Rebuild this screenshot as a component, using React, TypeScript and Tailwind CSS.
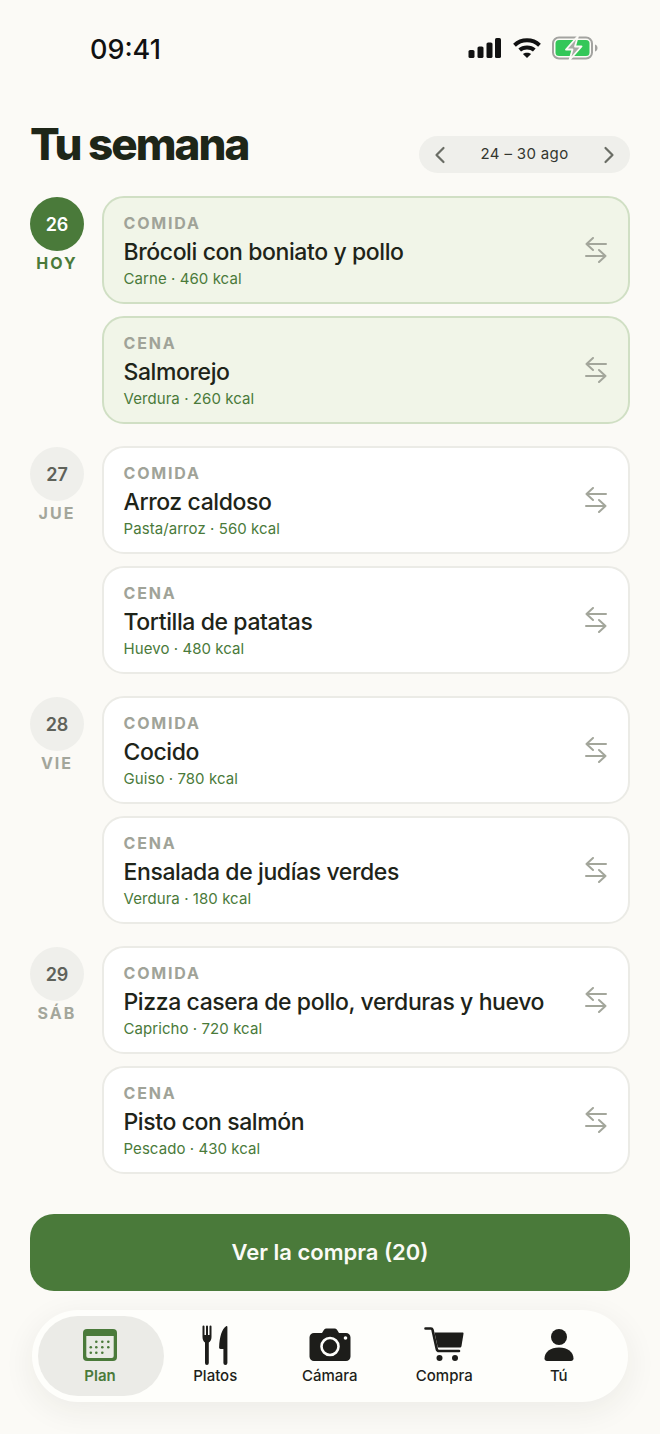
const DAYS = [
  {
    num: '26',
    label: 'HOY',
    today: true,
    meals: [
      { kind: 'COMIDA', name: 'Brócoli con boniato y pollo', info: 'Carne · 460 kcal' },
      { kind: 'CENA', name: 'Salmorejo', info: 'Verdura · 260 kcal' },
    ],
  },
  {
    num: '27',
    label: 'JUE',
    meals: [
      { kind: 'COMIDA', name: 'Arroz caldoso', info: 'Pasta/arroz · 560 kcal' },
      { kind: 'CENA', name: 'Tortilla de patatas', info: 'Huevo · 480 kcal' },
    ],
  },
  {
    num: '28',
    label: 'VIE',
    meals: [
      { kind: 'COMIDA', name: 'Cocido', info: 'Guiso · 780 kcal' },
      { kind: 'CENA', name: 'Ensalada de judías verdes', info: 'Verdura · 180 kcal' },
    ],
  },
  {
    num: '29',
    label: 'SÁB',
    meals: [
      { kind: 'COMIDA', name: 'Pizza casera de pollo, verduras y huevo', info: 'Capricho · 720 kcal' },
      { kind: 'CENA', name: 'Pisto con salmón', info: 'Pescado · 430 kcal' },
    ],
  },
];

function SwapIcon() {
  return (
    <svg width="22" height="26" viewBox="0 0 22 26" fill="none" stroke="#a3a69b" strokeWidth="2" strokeLinecap="round" strokeLinejoin="round">
      <path d="M21 7H1.500M8 1 1.500 7 8 13" />
      <path d="M1 19h19.500M14 13l6.500 6-6.500 6" />
    </svg>
  );
}

function StatusIcons() {
  return (
    <div className="flex items-center">
      <svg width="34" height="22" viewBox="0 0 34 22" fill="#111">
        <rect x="0.5" y="13" width="6" height="8" rx="1.6" />
        <rect x="9.5" y="9.5" width="6" height="11.5" rx="1.6" />
        <rect x="18.5" y="5.5" width="6" height="15.5" rx="1.6" />
        <rect x="27" y="1" width="6" height="20" rx="1.6" />
      </svg>
      <svg className="ml-[10px]" width="30" height="22" viewBox="0 0 29 22" fill="none" stroke="#111" strokeWidth="4">
        <path d="M2 8.2C9 1.6 20 1.6 27 8.2" />
        <path d="M7.2 13C11 9.6 18 9.6 21.8 13" />
        <path d="M14.5 21 10.4 16.9C12.6 15.2 16.4 15.2 18.6 16.9Z" fill="#111" stroke="none" />
      </svg>
      <svg className="ml-[10px]" width="46" height="24" viewBox="0 0 46 24" fill="none">
        <rect x="1" y="1.5" width="39" height="21" rx="6" stroke="#a3a3a0" strokeWidth="2" />
        <rect x="3.5" y="4" width="34" height="16" rx="3.5" fill="#34c759" />
        <path d="M43 8.5c1.6.5 2.500 1.800 2.500 3.500s-.9 3-2.500 3.500Z" fill="#a3a3a0" />
        <path d="M26 0 14 13.500H20.500L17.500 24 29.500 10.500H23Z" fill="#a9aaa6" stroke="#fbfaf6" strokeWidth="1.800" strokeLinejoin="round" />
      </svg>
    </div>
  );
}

function CalendarIcon() {
  const dots = [
    [13.3, 12.7], [19.3, 12.7], [25.3, 12.7],
    [7.8, 18.3], [13.3, 18.3], [19.3, 18.3], [25.3, 18.3],
    [7.8, 23.7], [13.3, 23.7], [19.3, 23.7],
  ];
  return (
    <svg width="34" height="32" viewBox="0 0 34 32">
      <rect x="0" y="0" width="34" height="32" rx="4" fill="#4a7a3a" />
      <path d="M3.300 7h27.400v20a2 2 0 0 1-2 2H5.300a2 2 0 0 1-2-2Z" fill="#e9ebe5" />
      {dots.map(([cx, cy]) => (
        <circle key={`${cx}-${cy}`} cx={cx} cy={cy} r="1.300" fill="#4a7a3a" />
      ))}
    </svg>
  );
}

function ForkKnifeIcon() {
  return (
    <svg width="26" height="40" viewBox="0 0 26 40" fill="#1d1d1a">
      <path d="M.5 1.500a1 1 0 0 1 2 0V10H4V1.500a1 1 0 0 1 2 0V10h1.500V1.500a1 1 0 0 1 2 0V12c0 3-1.300 4.800-2.700 5.500V38A1.900 1.900 0 0 1 3 38V17.500C1.700 16.800.5 15 .5 12Z" />
      <path d="M24.500 1c.5 0 .9.400.9 1v36a2 2 0 0 1-4 0V24h-2.800c-1 0-1.600-.7-1.500-1.700C17.600 12 19.800 3.800 24.500 1Z" />
    </svg>
  );
}

function CameraIcon() {
  return (
    <svg width="42" height="33" viewBox="0 0 42 33">
      <path d="M5 5h8l2-3.200A3 3 0 0 1 17.600.5h7.800A3 3 0 0 1 28 1.800L30 5h7a4.500 4.500 0 0 1 4.500 4.500v19A4.500 4.500 0 0 1 37 33H5a4.500 4.500 0 0 1-4.500-4.500v-19A4.500 4.500 0 0 1 5 5Z" fill="#1d1d1a" />
      <circle cx="21" cy="18.500" r="8.500" fill="none" stroke="#fefefb" strokeWidth="2.600" />
      <circle cx="36.500" cy="10" r="1.800" fill="#fefefb" />
    </svg>
  );
}

function CartIcon() {
  return (
    <svg width="40" height="35" viewBox="0 0 40 35" fill="none">
      <path d="M1.500 1.500H7c.8 0 1.300.4 1.500 1.200l4.300 19.500c.3 1.300 1 1.800 2.200 1.800h20" stroke="#1d1d1a" strokeWidth="2.600" strokeLinecap="round" strokeLinejoin="round" />
      <path d="M10.500 5.500H38.500c.7 0 1.100.5 1 1.200l-2 12.300c-.2 1-.8 1.500-1.800 1.500H13.800Z" fill="#1d1d1a" />
      <circle cx="15.500" cy="31" r="3" fill="#1d1d1a" />
      <circle cx="31" cy="31" r="3" fill="#1d1d1a" />
    </svg>
  );
}

function PersonIcon() {
  return (
    <svg width="30" height="32" viewBox="0 0 30 32" fill="#1d1d1a">
      <circle cx="15" cy="8" r="8" />
      <path d="M15 18.500c8.500 0 14.500 4.500 14.500 11 0 1.500-1 2.500-2.500 2.500H3c-1.500 0-2.500-1-2.500-2.500 0-6.500 6-11 14.500-11Z" />
    </svg>
  );
}

function NavItem({ label, children, active }: { label: string; children: React.ReactNode; active?: boolean }) {
  return (
    <div
      className={
        active
          ? 'flex h-full w-[126px] shrink-0 flex-col items-center rounded-[40px] bg-[#ebebe7] pr-[2px]'
          : 'flex h-full w-[114.5px] shrink-0 flex-col items-center first-of-type:ml-0'
      }
    >
      <div className="mt-[6px] flex h-[45px] items-center justify-center">{children}</div>
      <span className={active ? 'text-[15px] leading-[18px] font-semibold text-[#4a7a3a]' : 'text-[15px] leading-[18px] font-medium text-[#1d1f1a]'}>
        {label}
      </span>
    </div>
  );
}

export default function App() {
  return (
    <div className="flex min-h-[1434px] flex-col bg-[#fbfaf6] px-[30px] font-['Inter',sans-serif] text-[#1d2419]">
      {/* barra de estado */}
      <div className="flex h-[96px] items-center justify-between pr-[32px] pl-[60px]">
        <span className="mt-[2px] text-[27px] leading-none font-medium text-[#111]">09:41</span>
        <StatusIcons />
      </div>

      <div className="flex h-[100px] items-start justify-between">
        <h1 className="mt-[23px] text-[44px] leading-[50px] font-extrabold tracking-[-2px] text-[#1e2618]">Tu semana</h1>
        <div className="mt-[40px] flex h-[37px] w-[211px] items-center justify-between rounded-full bg-[#efefeb] pr-[15px] pl-[15px]">
          <svg width="12" height="18" viewBox="0 0 12 18" fill="none" stroke="#6a6d65" strokeWidth="2.200" strokeLinecap="round" strokeLinejoin="round">
            <path d="M9.500 2 2.500 9l7 7" />
          </svg>
          <span className="text-[15px] font-normal tracking-[0.35px] text-[#33362f]">24 – 30 ago</span>
          <svg width="12" height="18" viewBox="0 0 12 18" fill="none" stroke="#6a6d65" strokeWidth="2.200" strokeLinecap="round" strokeLinejoin="round">
            <path d="M2.500 2l7 7-7 7" />
          </svg>
        </div>
      </div>

      <div className="flex flex-col gap-[22px]">
        {DAYS.map((day) => (
          <div key={day.num} className="flex gap-[18px]">
            <div className="flex w-[54px] shrink-0 flex-col items-center pt-[1px]">
              <div
                className={
                  day.today
                    ? 'flex h-[54px] w-[54px] items-center justify-center rounded-full bg-[#4a7a3a] text-[18px] font-semibold text-white'
                    : 'flex h-[54px] w-[54px] items-center justify-center rounded-full bg-[#efefeb] text-[18px] font-semibold text-[#5f625a]'
                }
              >
                {day.num}
              </div>
              <span
                className={
                  day.today
                    ? 'mt-[2px] text-[16px] leading-[20px] font-bold tracking-[2px] text-[#4a7a3a]'
                    : 'mt-[2px] text-[16px] leading-[20px] font-bold tracking-[2px] text-[#a3a69b]'
                }
              >
                {day.label}
              </span>
            </div>
            <div className="flex min-w-0 flex-1 flex-col gap-[12px]">
              {day.meals.map((meal) => (
                <div
                  key={meal.kind}
                  className={
                    day.today
                      ? 'flex h-[108px] items-center justify-between rounded-[22px] border-2 border-[#d0dfc4] bg-[#f1f5e8] pr-[21px] pl-[19.500px]'
                      : 'flex h-[108px] items-center justify-between rounded-[22px] border-2 border-[#ebebe6] bg-white pr-[21px] pl-[19.500px]'
                  }
                >
                  <div className="flex min-w-0 flex-col pt-[2px]">
                    <span className="text-[16px] leading-[20px] font-bold tracking-[1.8px] text-[#a0a398]">{meal.kind}</span>
                    <span className="mt-[3px] text-[23px] leading-[32px] font-medium tracking-[-0.4px] text-[#1e2419]">{meal.name}</span>
                    <span className="mt-[1px] text-[15px] leading-[20px] font-normal tracking-[0.07px] text-[#4a7a3a]">{meal.info}</span>
                  </div>
                  <SwapIcon />
                </div>
              ))}
            </div>
          </div>
        ))}
      </div>

      <button className="mt-[40px] flex h-[77px] items-center justify-center rounded-[24px] bg-[#4a7a3a] text-[22px] font-semibold text-[#fbfaf6]">
        Ver la compra (20)
      </button>

      <nav className="mx-[2px] mt-[19px] flex h-[92px] items-stretch rounded-[46px] bg-[#fefefb] py-[6px] pl-[6px] shadow-[0_8px_32px_rgba(40,40,30,0.07)]">
        <NavItem label="Plan" active>
          <CalendarIcon />
        </NavItem>
        <div className="-ml-[6px] flex">
          <NavItem label="Platos">
            <ForkKnifeIcon />
          </NavItem>
          <NavItem label="Cámara">
            <CameraIcon />
          </NavItem>
          <NavItem label="Compra">
            <CartIcon />
          </NavItem>
          <NavItem label="Tú">
            <PersonIcon />
          </NavItem>
        </div>
      </nav>
    </div>
  );
}
